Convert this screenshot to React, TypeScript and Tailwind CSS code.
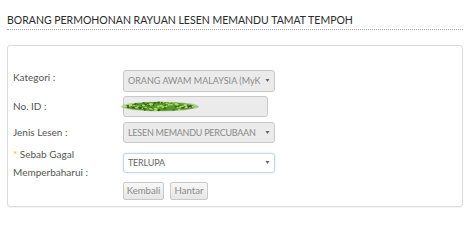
import React from "react";

function Scribble() {
  const specks: React.ReactElement[] = [];
  let seed = 7;
  const rnd = () => {
    seed = (seed * 9301 + 49297) % 233280;
    return seed / 233280;
  };
  for (let i = 0; i < 110; i++) {
    const t = rnd();
    const x = 4 + t * 70;
    const spread = Math.sin(Math.PI * (x / 78)) * 4.4;
    const y = 5.5 + (rnd() * 2 - 1) * spread;
    const dark = rnd() > 0.45;
    specks.push(
      <ellipse
        key={i}
        cx={x}
        cy={y}
        rx={0.8 + rnd() * 1.2}
        ry={0.5 + rnd() * 0.6}
        fill={dark ? "#2a5610" : "#b6de74"}
        opacity={0.9}
      />
    );
  }
  return (
    <svg width="80" height="11" viewBox="0 0 80 11" className="absolute left-[-4px] top-[4px]">
      <ellipse cx="40" cy="5.5" rx="39" ry="4.8" fill="#6aa83a" opacity="0.5" />
      <ellipse cx="40" cy="5.5" rx="34" ry="4.4" fill="#57982a" />
      {specks}
    </svg>
  );
}

function Arrow() {
  return (
    <svg width="5" height="4" viewBox="0 0 5 4" className="shrink-0">
      <path d="M0.5 0 L4.5 0 L2.5 3 Z" fill="#666" />
    </svg>
  );
}

function DisabledSelect({ text, h, track }: { text: string; h: string; track: string }) {
  return (
    <div
      className={`w-[152px] ${h} flex items-center border border-[#c9c9c9] rounded-[3px] bg-[#ebebeb] pl-[4px] pr-[4px]`}
    >
      <span className={`w-[135px] overflow-hidden whitespace-nowrap text-[9px] ${track} text-[#8a8a8a]`}>
        {text}
      </span>
      <div className="flex-1 flex justify-end">
        <Arrow />
      </div>
    </div>
  );
}

export default function App() {
  return (
    <div
      className="w-[474px] h-[233px] bg-white pl-[7px] pr-[11px] pt-[14px]"
      style={{ fontFamily: "Lato, 'Open Sans', sans-serif" }}
    >
      <div className="h-[16px] border-b border-dotted border-[#a8a8a8] text-[10.5px] leading-[12px] text-[#2a2a2a]">
        BORANG PERMOHONAN RAYUAN LESEN MEMANDU TAMAT TEMPOH
      </div>
      <div className="mt-[15px] border border-[#dcdcdc] rounded-[3px] shadow-[0_1px_1px_rgba(0,0,0,0.05)] pt-[24px] pb-[6px] pl-[5px] text-[10px] text-[#555]">
        <div className="flex items-center h-[22px]">
          <div className="w-[110px] pb-[7px]">Kategori :</div>
          <DisabledSelect text="ORANG AWAM MALAYSIA (MyK" h="h-[22px]" track="tracking-[0px]" />
        </div>
        <div className="flex items-center h-[21px] mt-[4px]">
          <div className="w-[110px]">No. ID :</div>
          <div className="relative w-[145px] h-[21px] border border-[#c9c9c9] rounded-[3px] bg-[#ebebeb]">
            <Scribble />
          </div>
        </div>
        <div className="flex items-center h-[21px] mt-[5px]">
          <div className="w-[110px]">Jenis Lesen :</div>
          <DisabledSelect text="LESEN MEMANDU PERCUBAAN" h="h-[21px]" track="tracking-[-0.25px]" />
        </div>
        <div className="flex items-center h-[36px] mt-[2px]">
          <div className="w-[110px] leading-[18px]">
            <div>
              <span className="text-[#e8c020]">*</span> Sebab Gagal
            </div>
            <div>Memperbaharui :</div>
          </div>
          <div className="w-[152px] h-[20px] flex items-center border border-[#c6d8ea] rounded-[3px] bg-white pl-[4px] pr-[4px] shadow-[0_0_2px_rgba(120,160,210,0.4)]">
            <span className="flex-1 text-[9px] tracking-[-0.2px] text-[#666]">TERLUPA</span>
            <Arrow />
          </div>
        </div>
        <div className="flex h-[18px] mt-[1px]">
          <div className="w-[110px]" />
          <div className="flex gap-[6px]">
            <div className="w-[41px] h-[18px] flex items-center justify-center border border-[#c9c9c9] rounded-[2px] bg-gradient-to-b from-[#f7f7f7] to-[#e6e6e6] text-[9.6px] text-[#8a8a8a]">
              Kembali
            </div>
            <div className="w-[38px] h-[18px] flex items-center justify-center border border-[#c9c9c9] rounded-[2px] bg-gradient-to-b from-[#f7f7f7] to-[#e6e6e6] text-[9.6px] text-[#8a8a8a]">
              Hantar
            </div>
          </div>
        </div>
      </div>
    </div>
  );
}
